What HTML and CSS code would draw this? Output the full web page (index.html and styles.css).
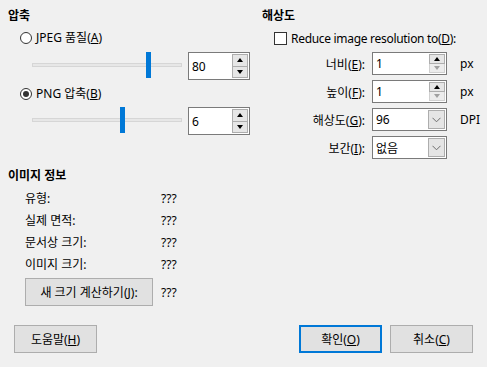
FILE: index.html
```html
<!DOCTYPE html>
<html lang="ko">
<head>
<meta charset="utf-8">
<title>이미지 압축</title>
<link rel="stylesheet" href="styles.css">
</head>
<body>
<div class="dialog">
  <div class="top">
    <div class="col-left">
      <h2 class="heading">압축</h2>
      <div class="radio-row"><span class="radio"></span><span>JPEG 품질(<u>A</u>)</span></div>
      <div class="slider-row">
        <div class="slider"><div class="track"></div><div class="thumb" style="left:114px"></div></div>
        <div class="spin big"><span class="val">80</span><span class="btns"><span class="sbtn"><i class="tri up"></i></span><span class="sbtn"><i class="tri down"></i></span></span></div>
      </div>
      <div class="radio-row second"><span class="radio checked"></span><span>PNG 압축(<u>B</u>)</span></div>
      <div class="slider-row second">
        <div class="slider"><div class="track"></div><div class="thumb" style="left:88px"></div></div>
        <div class="spin big"><span class="val">6</span><span class="btns"><span class="sbtn"><i class="tri up"></i></span><span class="sbtn"><i class="tri down"></i></span></span></div>
      </div>

      <h2 class="heading info-heading">이미지 정보</h2>
      <div class="info">
        <div class="info-row"><span class="info-label">유형:</span><span class="info-val">???</span></div>
        <div class="info-row"><span class="info-label">실제 면적:</span><span class="info-val">???</span></div>
        <div class="info-row"><span class="info-label">문서상 크기:</span><span class="info-val">???</span></div>
        <div class="info-row"><span class="info-label">이미지 크기:</span><span class="info-val">???</span></div>
        <div class="info-row calc-row"><span class="button calc">새 크기 계산하기(<u>J</u>):</span><span class="info-val">???</span></div>
      </div>
    </div>

    <div class="col-right">
      <h2 class="heading">해상도</h2>
      <div class="check-row"><span class="checkbox"></span><span class="check-text">Reduce image resolution to(<u>D</u>):</span></div>
      <div class="res-grid">
        <span class="res-label">너비(<u>E</u>):</span>
        <div class="spin small"><span class="val">1</span><span class="btns"><span class="sbtn"><i class="tri up"></i></span><span class="sbtn dis"><i class="tri down"></i></span></span></div>
        <span class="unit">px</span>

        <span class="res-label">높이(<u>F</u>):</span>
        <div class="spin small"><span class="val">1</span><span class="btns"><span class="sbtn"><i class="tri up"></i></span><span class="sbtn dis"><i class="tri down"></i></span></span></div>
        <span class="unit">px</span>

        <span class="res-label">해상도(<u>G</u>):</span>
        <div class="combo"><span class="val">96</span><span class="drop"><svg width="9" height="6" viewBox="0 0 9 6"><path d="M0.5 0.8 L4.5 4.8 L8.5 0.8" fill="none" stroke="#6d6d6d" stroke-width="1"/></svg></span></div>
        <span class="unit">DPI</span>

        <span class="res-label">보간(<u>I</u>):</span>
        <div class="combo"><span class="val">없음</span><span class="drop"><svg width="9" height="6" viewBox="0 0 9 6"><path d="M0.5 0.8 L4.5 4.8 L8.5 0.8" fill="none" stroke="#6d6d6d" stroke-width="1"/></svg></span></div>
        <span class="unit"></span>
      </div>
    </div>
  </div>

  <div class="footer">
    <span class="button">도움말(<u>H</u>)</span>
    <span class="spacer"></span>
    <span class="button default">확인(<u>O</u>)</span>
    <span class="button">취소(<u>C</u>)</span>
  </div>
</div>
</body>
</html>
```

FILE: styles.css
```css
html, body {
  margin: 0;
  padding: 0;
  background: #f0f0f0;
}

body {
  font-family: "Noto Sans", "Noto Sans CJK KR", sans-serif;
  font-size: 12px;
  color: #000;
  width: 487px;
  height: 367px;
  overflow: hidden;
}

u {
  text-decoration: underline;
  text-underline-offset: 1px;
}

.dialog {
  padding-top: 8px;
}

.top {
  display: flex;
}

.col-left {
  width: 254px;
  padding-left: 8px;
  box-sizing: border-box;
}

.col-right {
  padding-left: 8px;
  flex: 1;
}

.heading {
  margin: 0;
  font-size: 12px;
  font-weight: bold;
  line-height: 16px;
  height: 16px;
}

.radio-row {
  margin-top: 6px;
  margin-left: 12px;
  height: 16px;
  line-height: 16px;
  display: flex;
  align-items: center;
}

.radio-row.second {
  margin-top: 6px;
}

.radio {
  width: 12px;
  height: 12px;
  box-sizing: border-box;
  border: 1px solid #333;
  border-radius: 50%;
  background: #fff;
  margin-right: 4px;
  position: relative;
  flex: none;
}

.radio.checked::after {
  content: "";
  position: absolute;
  left: 2px;
  top: 2px;
  width: 6px;
  height: 6px;
  border-radius: 50%;
  background: #333;
}

.slider-row {
  margin-top: 6px;
  margin-left: 24px;
  height: 28px;
  display: flex;
  gap: 6px;
}

.slider-row.second {
  margin-top: 5px;
}

.slider {
  width: 150px;
  height: 28px;
  position: relative;
}

.track {
  position: absolute;
  left: 0;
  right: 0;
  top: 11px;
  height: 4px;
  box-sizing: border-box;
  background: #e7e7e7;
  border: 1px solid #d6d6d6;
}

.thumb {
  position: absolute;
  top: 0;
  width: 5px;
  height: 26px;
  background: #0078d7;
}

.spin {
  display: flex;
  align-items: stretch;
  background: #fff;
  border: 1px solid #7a7a7a;
  box-sizing: border-box;
}

.spin .val, .combo .val {
  flex: 1;
  padding-left: 3px;
  display: flex;
  align-items: center;
}

.spin.big {
  width: 62px;
  height: 28px;
}

.spin.small {
  width: 75px;
  height: 23px;
}

.btns {
  display: flex;
  flex-direction: column;
  width: 16px;
  padding: 1px;
  gap: 0;
}

.sbtn {
  flex: 1;
  background: #e6e6e6;
  border: 1px solid #adadad;
  display: flex;
  align-items: center;
  justify-content: center;
}

.sbtn + .sbtn {
  border-top: none;
}

.tri {
  width: 0;
  height: 0;
  border-left: 3.5px solid transparent;
  border-right: 3.5px solid transparent;
}

.tri.up {
  border-bottom: 4px solid #000;
}

.tri.down {
  border-top: 4px solid #000;
}

.sbtn.dis {
  border-color: #d0d0d0;
  background: #ececec;
}

.sbtn.dis .tri.down {
  border-top-color: #a0a0a0;
}

.check-row {
  margin-top: 6px;
  margin-left: 12px;
  height: 16px;
  display: flex;
  align-items: center;
}

.check-text {
  letter-spacing: -0.3px;
}

.checkbox {
  width: 13px;
  height: 13px;
  box-sizing: border-box;
  border: 1px solid #333;
  background: #fff;
  margin-right: 4px;
  flex: none;
}

.res-grid {
  margin-top: 6px;
  display: grid;
  grid-template-columns: 103px 75px auto;
  column-gap: 7px;
  row-gap: 5px;
  align-items: center;
}

.res-grid .res-label {
  text-align: right;
}

.unit {
  padding-left: 6px;
}

.combo {
  width: 75px;
  height: 23px;
  box-sizing: border-box;
  border: 1px solid #7a7a7a;
  background: #fff;
  display: flex;
}

.drop {
  width: 17px;
  margin: 1px;
  box-sizing: border-box;
  background: #e5e5e5;
  border: 1px solid #adadad;
  display: flex;
  align-items: center;
  justify-content: center;
}

.info-heading {
  margin-top: 33px;
}

.info {
  margin-top: 3px;
  padding-left: 17px;
}

.info-row {
  height: 22px;
  display: flex;
  align-items: center;
}

.info-label {
  width: 136px;
}

.calc-row {
  margin-top: 3px;
  height: 28px;
}

.button {
  box-sizing: border-box;
  height: 28px;
  background: #e1e1e1;
  border: 1px solid #adadad;
  display: inline-flex;
  align-items: center;
  justify-content: center;
}

.button.calc {
  width: 128px;
  margin-right: 8px;
}

.footer {
  margin-top: 19px;
  padding: 0 14px;
  display: flex;
  gap: 8px;
}

.footer .button {
  width: 83px;
}

.footer .button.default {
  border: 2px solid #0078d7;
}

.spacer {
  flex: 1;
}
```
